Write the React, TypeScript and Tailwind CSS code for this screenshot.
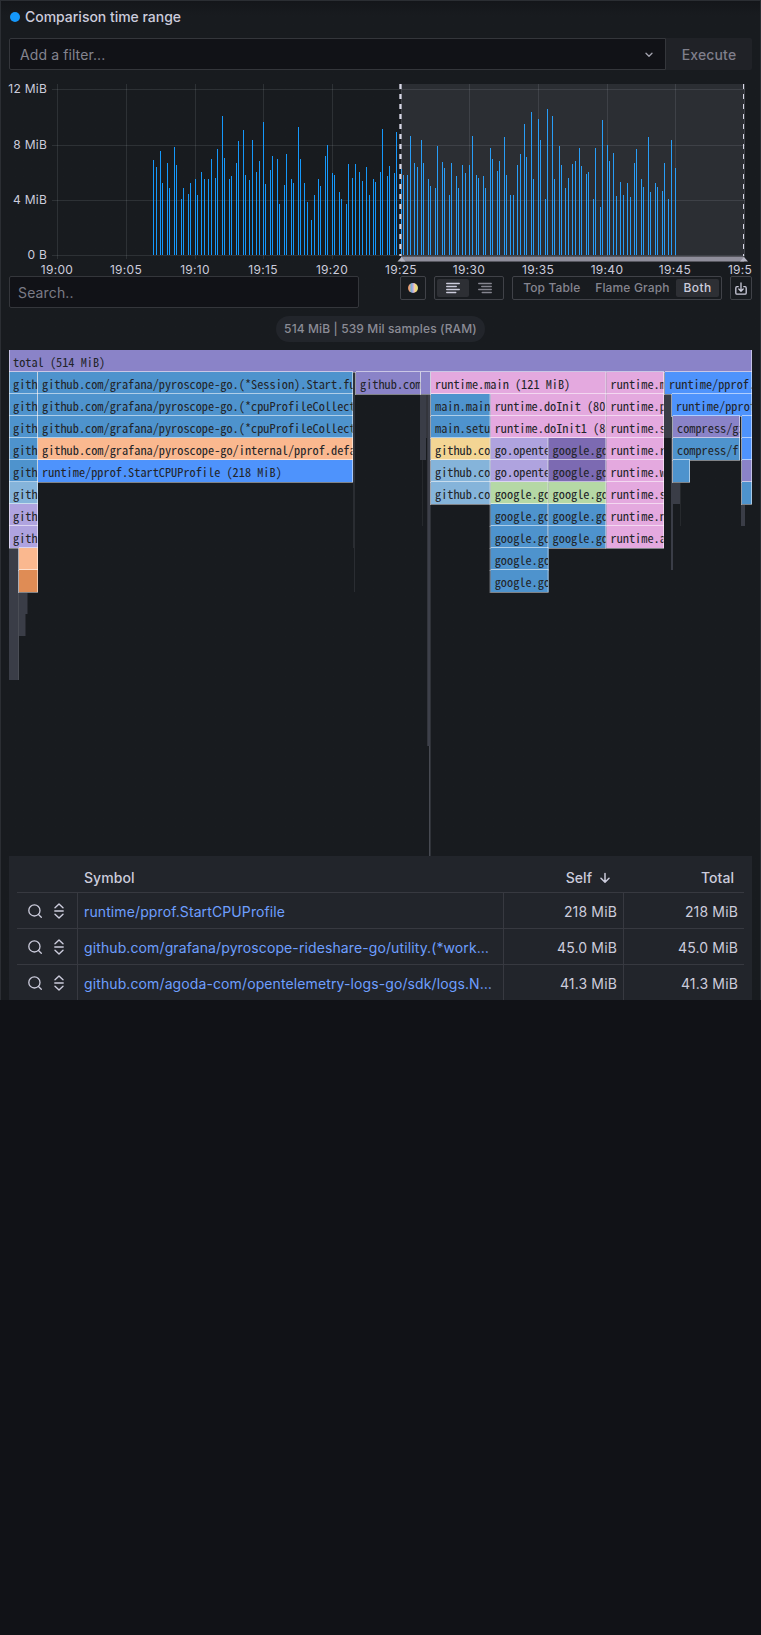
import type { ReactNode } from "react";

/* ---------- timeline ---------- */

// [x, height] of each sample
const samples: [number, number][] = [
  [153, 95], [156, 88], [160, 104], [162, 72], [167, 92], [169, 67], [174, 108], [176, 90], [181, 56], [183, 67],
  [188, 61], [190, 72], [195, 76], [197, 60], [201, 83], [204, 76], [208, 76], [211, 96], [215, 77], [217, 106],
  [222, 139], [224, 97], [229, 76], [231, 79], [236, 92], [238, 114], [243, 125], [245, 80], [249, 75], [252, 115],
  [256, 83], [259, 94], [263, 133], [265, 71], [270, 85], [272, 99], [277, 96], [279, 51], [284, 70], [286, 101],
  [291, 76], [293, 72], [298, 128], [300, 96], [304, 72], [307, 53], [311, 35], [314, 60], [318, 76], [320, 69],
  [325, 99], [327, 110], [332, 82], [334, 80], [339, 63], [341, 56], [346, 51], [348, 91], [352, 77], [355, 91],
  [359, 83], [362, 74], [366, 88], [369, 60], [373, 76], [375, 73], [380, 83], [382, 126], [387, 79], [389, 89],
  [394, 82], [396, 123], [401, 86], [403, 80], [407, 80], [410, 119], [414, 92], [417, 88], [421, 115], [423, 92],
  [428, 76], [430, 69], [435, 67], [437, 109], [442, 93], [444, 87], [449, 60], [451, 92], [456, 79], [458, 67],
  [462, 90], [465, 82], [469, 90], [472, 119], [476, 80], [478, 77], [483, 79], [485, 67], [490, 107], [492, 96],
  [497, 84], [499, 94], [504, 118], [506, 80], [510, 60], [513, 60], [517, 90], [520, 101], [524, 131], [526, 98],
  [531, 143], [533, 76], [538, 136], [540, 115], [545, 56], [547, 146], [552, 139], [554, 76], [559, 109], [561, 90],
  [565, 67], [568, 77], [572, 91], [575, 94], [579, 107], [581, 89], [586, 81], [588, 83], [593, 56], [595, 107],
  [600, 48], [602, 135], [607, 110], [609, 94], [613, 102], [616, 59], [620, 73], [623, 60], [627, 72], [630, 58],
  [634, 92], [636, 106], [641, 76], [643, 68], [648, 118], [650, 63], [655, 72], [657, 68], [662, 64], [664, 92],
  [668, 56], [671, 115], [675, 87],
];

const xTicks: [number, string][] = [
  [57, "19:00"], [126, "19:05"], [195, "19:10"], [263, "19:15"], [332, "19:20"],
  [401, "19:25"], [469, "19:30"], [538, "19:35"], [607, "19:40"], [675, "19:45"], [744, "19:50"],
];

const yTicks: [number, string][] = [[89, "12 MiB"], [145, "8 MiB"], [200, "4 MiB"], [255, "0 B"]];

function Timeline() {
  return (
    <svg viewBox="8 78 744 198" className="-ml-px block h-[198px] w-[744px] overflow-hidden">
      <g fill="#f0faff" fillOpacity="0.1">
        {yTicks.map(([y]) => (
          <rect key={y} x="52" y={y} width="693" height="1" />
        ))}
        {xTicks.map(([x]) => (
          <rect key={x} x={x} y="84" width="1" height="175" />
        ))}
      </g>
      <g fill="#1598fb">
        {samples.map(([x, h]) => (
          <rect key={x} x={x} y={255 - h} width="1" height={h} />
        ))}
      </g>
      <rect x="401" y="84" width="344" height="172" fill="#ccccdc" fillOpacity="0.11" />
      <g fill="#ccccdc">
        <path d="M400.5 84V256" stroke="#9b9ba8" strokeWidth="3" strokeDasharray="5 5" />
        <path d="M400.5 84V256M743.5 84V256" stroke="#d8d8e6" strokeWidth="1" strokeDasharray="5 5" />
        <rect x="401" y="256" width="343" height="6" fill="#57575f" />
        <rect x="401" y="257" width="343" height="4" fill="#8f8e9b" />
        <path d="M397.5 261.5L401.5 257L405.5 261.5ZM740 261.5L744 257L748 261.5Z" fill="#b4b4c2" />
      </g>
      <g className="font-[Inter,sans-serif] text-[12px] tracking-[0.3px]" fill="#ccccdc">
        {yTicks.map(([y, label]) => (
          <text key={label} x="47.2" y={y + 4.3} textAnchor="end">{label}</text>
        ))}
        {xTicks.map(([x, label]) => (
          <text key={label} x={x} y="274" textAnchor="middle">{label}</text>
        ))}
      </g>
    </svg>
  );
}

/* ---------- flame graph ---------- */

const PURPLE = "#8a83c8";
const BLUE = "#4e93cd";
const SKY = "#85b4da";
const LAVENDER = "#afa3df";
const PEACH = "#fab88f";
const ORANGE = "#df8c55";
const ROYAL = "#4e93fc";
const PINK = "#e4a9df";
const YELLOW = "#f3d594";
const VIOLET = "#7c6ab2";
const GREEN = "#b5d8a5";

const ROW = 22;
const CHAR = 6.15;

// [level, start, end, colour, label]
type Frame = [number, number, number, string, string?];

const session = "github.com/grafana/pyroscope-go.(*Session).Start.func1 (218 MiB)";
const collector = "github.com/grafana/pyroscope-go.(*cpuProfileCollector).Start (218 MiB)";
const gh = "github.com/grafana";
const gg = "google.golang.org";

const frames: Frame[] = [
  [0, 9, 752, PURPLE, "total (514 MiB)"],
  [1, 9, 38, BLUE, gh],
  [1, 38, 353, BLUE, session],
  [1, 356, 421, PURPLE, gh],
  [1, 421, 431, PURPLE],
  [1, 431, 606.5, PINK, "runtime.main (121 MiB)"],
  [1, 606.5, 664, PINK, "runtime.mcall"],
  [1, 665, 752, ROYAL, "runtime/pprof.profileWriter"],
  [2, 9, 38, BLUE, gh],
  [2, 38, 353, BLUE, collector],
  [2, 431, 490.7, BLUE, "main.main"],
  [2, 490.7, 606.5, PINK, "runtime.doInit (80.2 MiB)"],
  [2, 606.5, 664, PINK, "runtime.park_m"],
  [2, 672, 752, ROYAL, "runtime/pprof.(*profileBuilder)"],
  [3, 9, 38, BLUE, gh],
  [3, 38, 353, BLUE, collector],
  [3, 431, 490.7, BLUE, "main.setupOTEL"],
  [3, 490.7, 606.5, PINK, "runtime.doInit1 (80.2 MiB)"],
  [3, 606.5, 664, PINK, "runtime.schedule"],
  [3, 673, 740, PURPLE, "compress/gzip"],
  [3, 742, 752, ROYAL],
  [4, 9, 38, BLUE, gh],
  [4, 38, 353, PEACH, "github.com/grafana/pyroscope-go/internal/pprof.defaultCollector"],
  [4, 431, 490.7, YELLOW, gh],
  [4, 490.7, 548.6, LAVENDER, "go.opentelemetry.io"],
  [4, 548.6, 606.5, VIOLET, gg],
  [4, 606.5, 664, PINK, "runtime.resetspinning"],
  [4, 673, 740, BLUE, "compress/flate"],
  [4, 742, 752, ROYAL],
  [5, 9, 38, BLUE, gh],
  [5, 38, 353, ROYAL, "runtime/pprof.StartCPUProfile (218 MiB)"],
  [5, 431, 490.7, SKY, gh],
  [5, 490.7, 548.6, LAVENDER, "go.opentelemetry.io"],
  [5, 548.6, 606.5, VIOLET, gg],
  [5, 606.5, 664, PINK, "runtime.wakep"],
  [5, 673, 690, BLUE],
  [5, 742, 752, PURPLE],
  [6, 9, 38, SKY, gh],
  [6, 431, 490.7, SKY, gh],
  [6, 490.7, 548.6, GREEN, gg],
  [6, 548.6, 606.5, GREEN, gg],
  [6, 606.5, 664, PINK, "runtime.startm"],
  [6, 742, 752, BLUE],
  [7, 9, 38, LAVENDER, gh],
  [7, 490.7, 548.6, BLUE, gg],
  [7, 548.6, 606.5, BLUE, gg],
  [7, 606.5, 664, PINK, "runtime.newm"],
  [8, 9, 38, LAVENDER, gh],
  [8, 490.7, 548.6, BLUE, gg],
  [8, 548.6, 606.5, BLUE, gg],
  [8, 606.5, 664, PINK, "runtime.allocm"],
  [9, 19, 38, PEACH],
  [9, 490.7, 548.6, BLUE, gg],
  [10, 19, 38, ORANGE],
  [10, 490.7, 548.6, BLUE, gg],
];

// collapsed frames: [x, width, first level, level count, colour]
const collapsed: [number, number, number, number, string][] = [
  [9, 10, 9, 6, "#3a3d47"],
  [18, 1, 9, 6, "#4a4d55"],
  [19, 8.5, 11, 1, "#3a3d47"],
  [19, 6.5, 12, 1, "#3a3d47"],
  [354, 1, 1, 10, "#2a2d32"],
  [353, 2, 1, 5, "#30333a"],
  [353, 1, 6, 3, "#2a2d32"],
  [422, 1, 5, 3, "#26292d"],
  [420, 6, 2, 3, "#3a3d47"],
  [426, 2, 2, 2, "#33353c"],
  [427, 1, 2, 16, "#33353c"],
  [428, 2, 2, 16, "#3d404a"],
  [429, 1, 18, 5, "#474a52"],
  [430, 1, 6, 17, "#2f3238"],
  [664, 7, 2, 2, "#3a3d47"],
  [671, 2, 3, 7, "#3a3d47"],
  [673, 7, 6, 1, "#3a3d47"],
  [680, 1, 6, 2, "#26292d"],
  [741, 4, 7, 1, "#3a3d47"],
];

function FlameGraph() {
  return (
    <svg viewBox="0 0 743 506" className="block h-[506px] w-[743px] overflow-hidden font-['Noto_Sans_Mono_CJK_JP',monospace] text-[12.3px] tracking-normal">
      {collapsed.map(([x, w, level, count, color]) => (
        <rect key={`${x}-${level}-${w}`} x={x - 9} y={level * ROW} width={w} height={count * ROW} fill={color} />
      ))}
      {frames.map(([level, x0, x1, color, label]) => {
        const x = x0 - 9;
        const y = level * ROW;
        const w = x1 - x0;
        return (
          <g key={`${level}-${x0}`}>
            <rect x={x - 1} y={y} width="1" height="23" fill="#d3d6e0" fillOpacity="0.7" />
            <rect x={x} y={y + ROW} width={w} height="1" fill="#808387" />
            <rect x={x} y={y} width={w} height={ROW} fill={color} />
            <rect x={x} y={y - 1} width={w} height="1" fill="#fff" fillOpacity="0.55" />
            <rect x={x + w - 1} y={y} width="1" height={ROW} fill="#fff" fillOpacity="0.5" />
            {x === 0 && <rect x="0" y={y} width="1" height={ROW} fill="#fff" fillOpacity="0.5" />}
            {label && (
              <svg x={x} y={y} width={w - 0.5} height={ROW} overflow="hidden">
                <text x="4" y="17" fill="#222428">{label.slice(0, Math.ceil((w - 5) / CHAR))}</text>
              </svg>
            )}
          </g>
        );
      })}
    </svg>
  );
}

/* ---------- toolbar icons ---------- */

const PaletteDot = () => (
  <svg viewBox="0 0 10 10" className="size-2.5">
    <defs>
      <linearGradient id="palette">
        <stop offset="0" stopColor="#e58f5c" />
        <stop offset="0.18" stopColor="#e0a888" />
        <stop offset="0.32" stopColor="#74b5d6" />
        <stop offset="0.5" stopColor="#b6a6e0" />
        <stop offset="0.62" stopColor="#f0c8c0" />
        <stop offset="0.78" stopColor="#f5dd70" />
        <stop offset="1" stopColor="#d8dc9a" />
      </linearGradient>
    </defs>
    <circle cx="5" cy="5" r="5" fill="url(#palette)" />
  </svg>
);

const AlignIcon = ({ right = false }: { right?: boolean }) => (
  <svg viewBox="0 0 14 12" className="h-3 w-3.5" stroke="currentColor" strokeWidth="1.3" strokeLinecap="round">
    <path d={right ? "M.7 1.5H13.3M3.7 4.5H13.3M.7 7.5H13.3M4.2 10.5H13.3" : "M.7 1.5H13.3M.7 4.5H10.3M.7 7.5H13.3M.7 10.5H9.8"} />
  </svg>
);

const DownloadIcon = () => (
  <svg viewBox="0 0 12 13" className="h-[13px] w-3" fill="none" stroke="currentColor" strokeWidth="1.3" strokeLinecap="round" strokeLinejoin="round">
    <path d="M3.2 4.7H2C1.2 4.7.8 5.1.8 5.9V11C.8 11.8 1.2 12.2 2 12.2H10C10.8 12.2 11.2 11.8 11.2 11V5.9C11.2 5.1 10.8 4.7 10 4.7H8.8" />
    <path d="M6 1V9M3.8 7L6 9.2L8.2 7" />
  </svg>
);

const SearchIcon = () => (
  <svg viewBox="0 0 14 14" className="size-3.5" fill="none" stroke="currentColor" strokeWidth="1.3" strokeLinecap="round">
    <circle cx="6.4" cy="6.4" r="5.6" />
    <path d="M10.5 10.5L13.3 13.3" />
  </svg>
);

const SandwichIcon = () => (
  <svg viewBox="0 0 10 16" className="h-4 w-2.5" fill="none" stroke="currentColor" strokeWidth="1.4" strokeLinecap="round" strokeLinejoin="round">
    <path d="M1 4.8L5 1L9 4.8M.8 8H9.2M1 11.2L5 15L9 11.2" />
  </svg>
);

/* ---------- symbol table ---------- */

const rows: [string, string, string][] = [
  ["runtime/pprof.StartCPUProfile", "218 MiB", "218 MiB"],
  ["github.com/grafana/pyroscope-rideshare-go/utility.(*work…", "45.0 MiB", "45.0 MiB"],
  ["github.com/agoda-com/opentelemetry-logs-go/sdk/logs.N…", "41.3 MiB", "41.3 MiB"],
];

function SymbolTable() {
  return (
    <div className="h-36 overflow-hidden bg-[#22252b] px-2">
      <div className="grid h-9 grid-cols-[61px_426px_120px_120px] items-center pt-[7px] font-medium tracking-[0.05px]">
        <span />
        <span className="pl-[6px]">Symbol</span>
        <span className="flex items-center justify-end gap-2 pr-[14px]">
          Self
          <svg viewBox="0 0 10 12" className="h-3 w-2.5" fill="none" stroke="currentColor" strokeWidth="1.5" strokeLinecap="round" strokeLinejoin="round">
            <path d="M5 1.5V10M1 6.3L5 10.2L9 6.3" />
          </svg>
        </span>
        <span className="pr-[10px] text-right">Total</span>
      </div>
      {rows.map(([name, self, total]) => (
        <div key={name} className="grid h-9 grid-cols-[61px_426px_120px_120px] border-t border-[#373940] leading-[37px]">
          <span className="flex h-[35px] items-center gap-3 border-r border-[#373940] pt-px pl-[11px]">
            <SearchIcon />
            <SandwichIcon />
          </span>
          <span className="h-[35px] overflow-hidden border-r border-[#373940] pl-[6px] tracking-[0.11px] whitespace-nowrap text-[#6e9fff]">{name}</span>
          <span className="h-[35px] border-r border-[#373940] pr-[6px] text-right">{self}</span>
          <span className="h-[35px] pr-[6px] text-right">{total}</span>
        </div>
      ))}
    </div>
  );
}

/* ---------- page ---------- */

const Group = ({ className, children }: { className: string; children: ReactNode }) => (
  <div className={`flex h-6 items-center rounded-[2px] border border-[#404248] p-0.5 ${className}`}>{children}</div>
);

export default function App() {
  return (
    <div className="min-h-[1635px] w-[761px] bg-[#111217] font-[Inter,sans-serif] text-[14px] tracking-[0.15px] text-[#ccccdc]">
      <main className="h-[1000px] overflow-hidden border border-b-0 border-[#2b2e33] bg-[#181b1f] bg-linear-to-b from-[#14161a] to-[#181b1f] to-[14px] pr-2 pl-2">
        <h1 className="flex h-[37px] items-center gap-[5px] pb-[6px] pl-px">
          <span className="size-2.5 rounded-full bg-[#1598fb]" />
          <span className="-mt-px font-medium tracking-[-0.02px]">Comparison time range</span>
        </h1>

        <div className="flex h-8">
          <div className="flex w-[657px] items-center justify-between rounded-l-[2px] border border-[#34363b] bg-[#111217] pr-3 pl-[10px] tracking-[0.1px] text-[#84848f]">
            Add a filter...
            <svg viewBox="0 0 8 6" className="mt-px h-1.5 w-2" fill="none" stroke="#a3a3af" strokeWidth="1.3" strokeLinecap="round" strokeLinejoin="round">
              <path d="M1 1.2L4 4.3L7 1.2" />
            </svg>
          </div>
          <button className="w-[86px] rounded-r-[2px] bg-[#202227] font-medium text-[#7f7f8b]">Execute</button>
        </div>

        <div className="pt-2">
          <Timeline />
        </div>

        <div className="flex items-start">
          <div className="mr-[41px] flex h-8 w-[350px] items-center rounded-[2px] border border-[#34363b] bg-[#111217] pt-px pl-2 text-[#7b7b86]">Search..</div>
          <Group className="mr-2 w-[26px] justify-center">
            <PaletteDot />
          </Group>
          <Group className="mr-2 w-[70px]">
            <span className="flex h-[18px] w-8 items-center justify-center rounded-[2px] bg-[#2d2f34]">
              <AlignIcon />
            </span>
            <span className="flex h-[18px] w-8 items-center justify-center text-[#85858f]">
              <AlignIcon right />
            </span>
          </Group>
          <Group className="mr-2 w-[210px] text-[12px] font-medium tracking-[0.15px] text-[#85858f]">
            <span className="w-[74px] text-center">Top Table</span>
            <span className="w-[88px] text-center">Flame Graph</span>
            <span className="flex h-[18px] w-[43px] items-center justify-center rounded-[2px] bg-[#2d2f34] tracking-[0.4px] text-[#ccccdc]">Both</span>
          </Group>
          <Group className="w-[22px] justify-center">
            <DownloadIcon />
          </Group>
        </div>

        <div className="flex h-[42px] items-start justify-center pt-2">
          <div className="flex h-[26px] w-[209px] items-center justify-center rounded-full bg-[#22252b] text-[12px] font-medium tracking-[0.12px] text-[#8b8c96]">
            514 MiB | 539 Mil samples (RAM)
          </div>
        </div>

        <FlameGraph />
        <SymbolTable />
      </main>
    </div>
  );
}
